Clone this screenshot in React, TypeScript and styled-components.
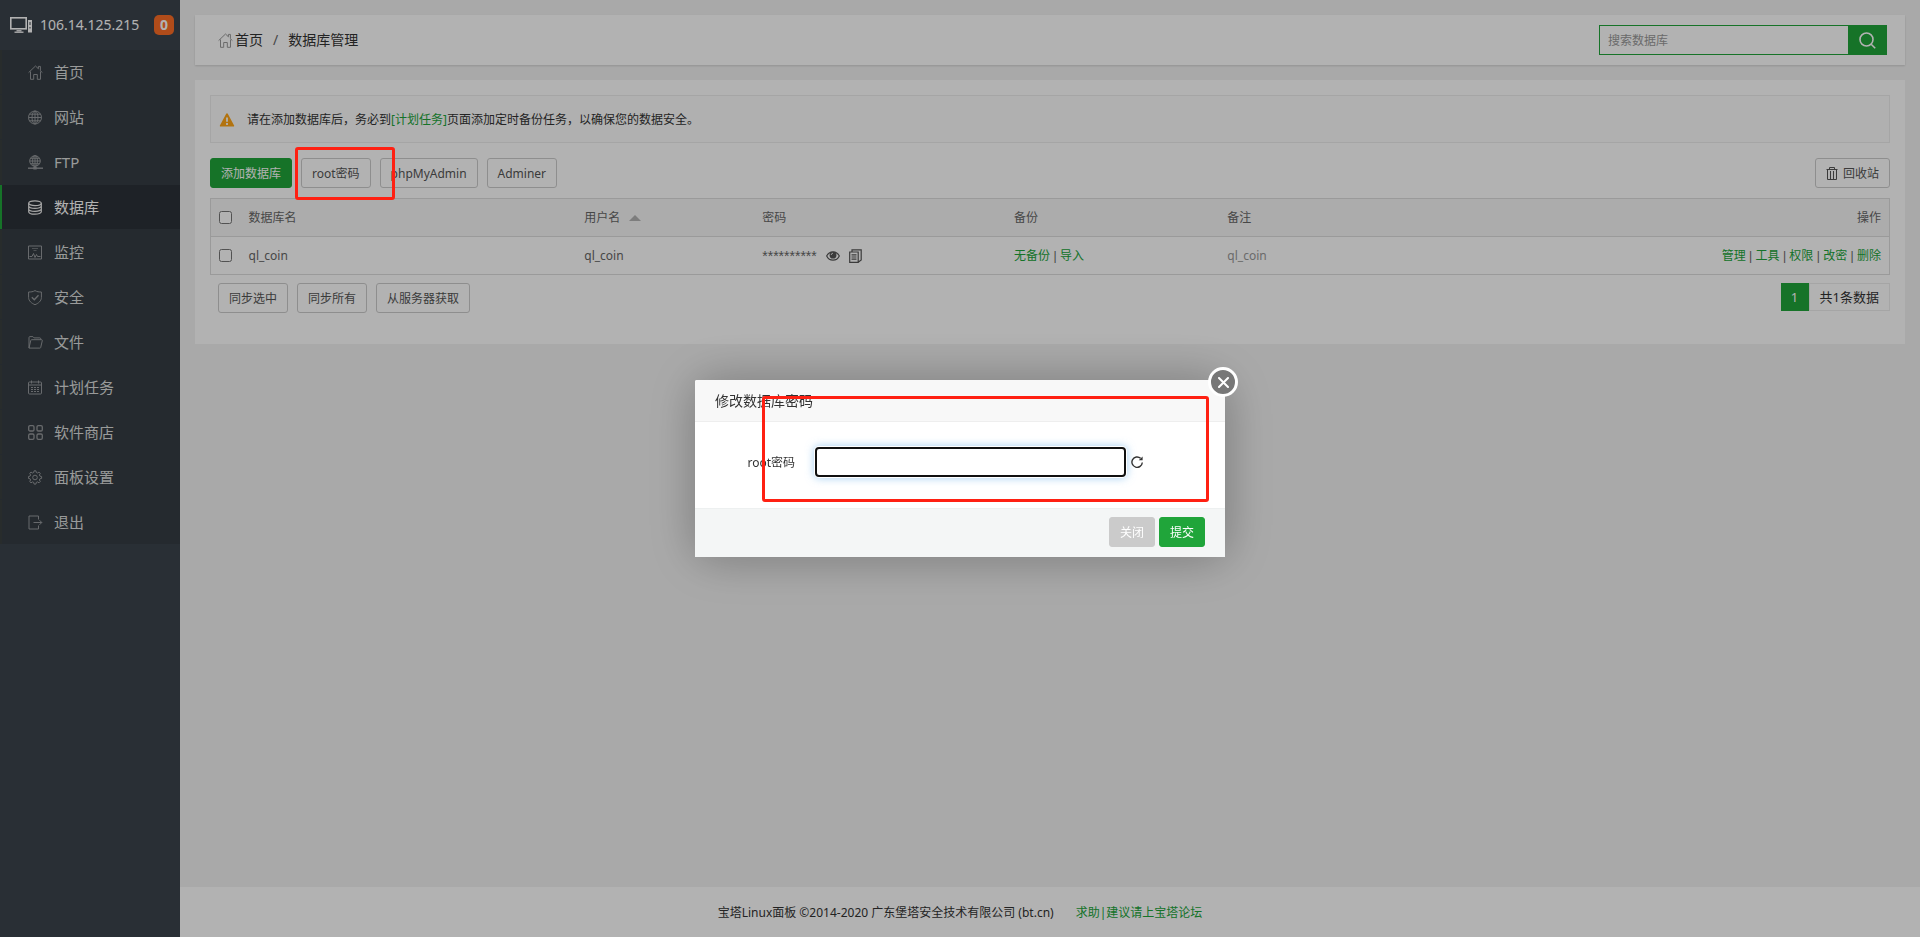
import React from 'react';
import styled, { createGlobalStyle } from 'styled-components';

const GREEN = '#20a53a';

const GlobalStyle = createGlobalStyle`
  *, *::before, *::after { box-sizing: border-box; }
  body {
    margin: 0;
    background: #f3f3f3;
    color: #333;
    font: 12px/18px "Noto Sans", "Noto Sans CJK SC", sans-serif;
  }
  button, input { font: inherit; margin: 0; }
  a { color: ${GREEN}; text-decoration: none; }
`;

const Page = styled.div`
  display: flex;
  min-height: 100vh;
`;

/* ---------- sidebar ---------- */

const Sidebar = styled.aside`
  flex: 0 0 180px;
  background: #3c444d;
`;

const ServerBar = styled.div`
  display: flex;
  align-items: center;
  justify-content: space-between;
  height: 50px;
  padding: 0 6px 0 10px;
  color: #fff;
`;

const ServerName = styled.span`
  display: flex;
  align-items: center;
  gap: 8px;
  font-size: 14px;
`;

const MessageCount = styled.span`
  width: 20px;
  height: 20px;
  border-radius: 5px;
  background: #fc6d26;
  font-size: 14px;
  font-weight: 700;
  line-height: 20px;
  text-align: center;
`;

const NavList = styled.ul`
  margin: 0;
  padding: 0;
  list-style: none;
  background: #353d44;
`;

const NavLink = styled.a<{ $active?: boolean }>`
  display: flex;
  align-items: center;
  gap: 11px;
  height: 44px;
  margin-bottom: 1px;
  padding-left: 26px;
  border-left: 2px solid ${(p) => (p.$active ? GREEN : '#3a3f40')};
  background: ${(p) => (p.$active ? '#2c3138' : 'transparent')};
  color: ${(p) => (p.$active ? '#fff' : '#dcdddd')};
  font-size: 15px;

  svg { color: ${(p) => (p.$active ? '#f0f0f0' : '#96999c')}; }
`;

/* ---------- main column ---------- */

const Main = styled.div`
  flex: 1;
  min-width: 0;
  display: flex;
  flex-direction: column;
`;

const Content = styled.main`
  flex: 1;
  display: flex;
  flex-direction: column;
  gap: 15px;
  padding: 15px;
`;

const TopBar = styled.header`
  display: flex;
  align-items: center;
  justify-content: space-between;
  height: 50px;
  padding: 0 18px 0 23px;
  background: #fff;
  box-shadow: 0 1px 2px rgba(0, 0, 0, 0.15);
`;

const Breadcrumb = styled.nav`
  display: flex;
  align-items: center;
  gap: 10px;
  font-size: 14px;
`;

const Crumb = styled.a`
  display: flex;
  align-items: center;
  gap: 2px;
  color: #333;
  svg { color: #999; }
`;

const CrumbSeparator = styled.span`
  color: #666;
`;

const SearchForm = styled.form`
  display: flex;
  width: 288px;
  height: 30px;
`;

const SearchInput = styled.input`
  flex: 1;
  min-width: 0;
  padding: 2px 8px 0;
  border: 1px solid ${GREEN};
  border-right: 0;
  border-radius: 0;
  background: #fff;
  outline: none;
  &::placeholder { color: #999; opacity: 1; }
`;

const SearchButton = styled.button`
  display: flex;
  align-items: center;
  justify-content: center;
  width: 39px;
  padding: 0;
  border: 0;
  background: ${GREEN};
  color: #fff;
`;

const Panel = styled.section`
  padding: 15px 15px 31px;
  background: #fff;
`;

const Notice = styled.p`
  display: flex;
  align-items: center;
  gap: 12px;
  height: 48px;
  margin: 0 0 15px;
  padding: 2px 8px 0;
  border: 1px solid #ededed;
  background: #fcfcfc;
`;

const Toolbar = styled.div<{ $inset?: boolean }>`
  display: flex;
  align-items: flex-start;
  justify-content: space-between;
  margin-bottom: ${(p) => (p.$inset ? '0' : '10px')};
  padding: ${(p) => (p.$inset ? '8px 0 0 8px' : '0')};
`;

const ButtonGroup = styled.div`
  display: flex;
  gap: 9px;
`;

type Tone = 'plain' | 'primary' | 'muted';

const toneStyles: Record<Tone, string> = {
  plain: 'background: #fff; border-color: #ccc; color: #555;',
  primary: `background: ${GREEN}; border-color: ${GREEN}; color: #fff;`,
  muted: 'background: #cbcbcb; border-color: #cbcbcb; color: #fff;',
};

const Button = styled.button<{ $tone?: Tone }>`
  display: flex;
  align-items: center;
  gap: 5px;
  height: 30px;
  padding: 2px 10px 0;
  border: 1px solid;
  border-radius: 3px;
  white-space: nowrap;
  ${(p) => toneStyles[p.$tone ?? 'plain']}
`;

const Marked = styled.div`
  position: relative;
`;

const Highlight = styled.span<{ $top: number; $left: number; $width: number; $height: number }>`
  position: absolute;
  z-index: 30;
  top: ${(p) => p.$top}px;
  left: ${(p) => p.$left}px;
  width: ${(p) => p.$width}px;
  height: ${(p) => p.$height}px;
  border: 3px solid #ff2012;
  border-radius: 3px;
  pointer-events: none;
`;

const Table = styled.table`
  width: 100%;
  table-layout: fixed;
  border: 1px solid #ddd;
  border-collapse: collapse;
  color: #666;
`;

const HeadCell = styled.th<{ $width?: string; $right?: boolean }>`
  width: ${(p) => p.$width ?? 'auto'};
  height: 38px;
  padding: 0 8px;
  background: #f6f6f6;
  border-bottom: 1px solid #ddd;
  font-weight: 400;
  text-align: ${(p) => (p.$right ? 'right' : 'left')};
`;

const Cell = styled.td<{ $right?: boolean; $soft?: boolean }>`
  height: 38px;
  padding: 0 8px;
  color: ${(p) => (p.$soft ? '#999' : 'inherit')};
  text-align: ${(p) => (p.$right ? 'right' : 'left')};
`;

const Tick = styled.input`
  display: block;
  width: 13px;
  height: 13px;
`;

const InlineRow = styled.span`
  display: flex;
  align-items: center;
  gap: 9px;
`;

const MaskedPassword = styled.span`
  font-family: "Liberation Sans", sans-serif;
  font-size: 14px;
`;

const Divider = styled.span`
  font-family: "Liberation Sans", sans-serif;
`;

const IconButton = styled.button`
  display: flex;
  padding: 0;
  border: 0;
  background: none;
  color: #555;
`;

const Pager = styled.div`
  display: flex;
  height: 28px;
  font-size: 13px;
  line-height: 28px;
`;

const PageNumber = styled.span`
  width: 28px;
  background: ${GREEN};
  color: #fff;
  text-align: center;
`;

const PageTotal = styled.span`
  padding: 0 10px;
  border: 1px solid #ededed;
  line-height: 26px;
`;

const Footer = styled.footer`
  display: flex;
  align-items: center;
  justify-content: center;
  gap: 22px;
  height: 50px;
  padding: 2px 180px 0 0;
  background: #fff;
`;

/* ---------- dialog ---------- */

const Backdrop = styled.div`
  position: fixed;
  inset: 0;
  z-index: 20;
  display: flex;
  align-items: center;
  justify-content: center;
  background: rgba(0, 0, 0, 0.3);
`;

const Dialog = styled.div`
  position: relative;
  width: 530px;
  border-radius: 2px;
  background: #fff;
  box-shadow: 1px 1px 50px rgba(0, 0, 0, 0.3);
`;

const DialogTitle = styled.h2`
  height: 42px;
  margin: 0;
  padding: 0 20px;
  border-bottom: 1px solid #eee;
  border-radius: 2px 2px 0 0;
  background: #f8f8f8;
  font-size: 14px;
  font-weight: 400;
  line-height: 42px;
`;

const DialogBody = styled.div`
  display: flex;
  align-items: center;
  height: 86px;
  padding-bottom: 6px;
`;

const FieldLabel = styled.label`
  width: 100px;
  margin-right: 20px;
  padding-top: 2px;
  text-align: right;
`;

const PasswordInput = styled.input`
  width: 311px;
  height: 30px;
  margin-right: 5px;
  padding: 0 10px;
  border: 2px solid #101010;
  border-radius: 4px;
  outline: none;
  box-shadow: 0 0 0 1px #fff, 0 0 9px 1px rgba(102, 175, 233, 0.6);
`;

const DialogFooter = styled.div`
  display: flex;
  justify-content: flex-end;
  gap: 4px;
  padding: 8px 20px 10px;
  border-top: 1px solid #edf0f0;
  background: #f4f6f6;
`;

const CloseButton = styled.button`
  position: absolute;
  top: -13px;
  right: -13px;
  display: flex;
  align-items: center;
  justify-content: center;
  width: 30px;
  height: 30px;
  padding: 0;
  border: 3px solid #fff;
  border-radius: 50%;
  background: #777;
  color: #fff;
`;

/* ---------- icons ---------- */

type IconProps = { size?: number; children: React.ReactNode };

const Icon = ({ size = 15, children }: IconProps) => (
  <svg width={size} height={size} viewBox="0 0 15 15" fill="none" stroke="currentColor" strokeWidth="1" aria-hidden="true">
    {children}
  </svg>
);

const homeShape = (
  <path d="M.6 7.6 7.5 1l2.9 2.8V1.4h2v4.3l2 1.9M2.5 6.5v7.8h3.2V9.5h3.6v4.8h3.2V6.5" />
);
const globeShape = (
  <>
    <circle cx="7" cy="7.5" r="6.5" />
    <ellipse cx="7" cy="7.5" rx="3" ry="6.5" />
    <path d="M7 1v13M.5 7.5h13M1.4 4.2h11.2M1.4 10.8h11.2" />
  </>
);
const ftpShape = (
  <>
    <circle cx="7" cy="6" r="5.3" />
    <ellipse cx="7" cy="6" rx="2.4" ry="5.3" />
    <path d="M7 .7v12M1.7 6h10.6M2.5 3.3h9M2.5 8.7h9" />
    <path d="M-.5 13.2h15.5" strokeWidth="1.4" />
    <path d="M5.3 13.2h3.4" strokeWidth="2.6" />
  </>
);
const databaseShape = (
  <g strokeWidth="1.2">
    <ellipse cx="7" cy="3.2" rx="6.3" ry="2.4" />
    <path d="M.7 3.2v8.5C.7 13 3.5 14.2 7 14.2s6.3-1.2 6.3-2.5V3.2M.7 6c0 1.3 2.8 2.4 6.3 2.4S13.3 7.3 13.3 6M.7 8.9c0 1.3 2.8 2.4 6.3 2.4s6.3-1.1 6.3-2.4" />
  </g>
);
const monitorShape = (
  <>
    <path d="M.5 1h13v13H.5z" />
    <path d="M4 3.5h6M5.5 5.500h3" strokeOpacity=".6" />
    <path d="M1.500 11.500H4l1.500-3 1.500 4 1.500-3 1 2h3" />
  </>
);
const shieldShape = (
  <>
    <path d="M7 .6C5 1.8 3 2 .6 2v5.500c0 3.500 3 5.800 6.400 7.200 3.400-1.400 6.400-3.700 6.400-7.200V2C11 2 9 1.800 7 .6Z" />
    <path d="m3.800 7.300 2.500 2.500 4.200-4.500" strokeWidth="1.3" />
  </>
);
const folderShape = (
  <path d="M1 13V2.500c0-.5.300-.9.900-.9h3l1.200 1.300h5.700c.6 0 1 .4 1 1v.8M1 13 2.800 5.300c.1-.4.400-.6.800-.6h10c.5 0 .8.400.7.900l-1.600 6.900c-.1.400-.4.600-.8.600H1Z" />
);
const calendarShape = (
  <>
    <rect x=".5" y="2" width="13" height="12" rx="1" />
    <path d="M.5 5h13M3.5.5v3M10.5.5v3" />
    <path d="M3 7.5h8M3 9.500h8M3 11.500h8" strokeDasharray="2 1" />
  </>
);
const appsShape = (
  <g strokeWidth="1.3">
    <rect x=".7" y=".7" width="5.300" height="5.300" rx="1.3" />
    <rect x="9" y=".7" width="5.300" height="5.300" rx="1.3" />
    <rect x=".7" y="9" width="5.300" height="5.300" rx="1.3" />
    <rect x="9" y="9" width="5.300" height="5.300" rx="1.3" />
  </g>
);
const gearShape = (
  <>
    <circle cx="7" cy="7.500" r="2.300" />
    <path d="m5.700 2.500.4-1.700h1.800l.4 1.700 1.200.5 1.500-.9 1.300 1.300-.9 1.500.5 1.200 1.700.5v1.800l-1.700.4-.5 1.200.9 1.500-1.300 1.300-1.500-.9-1.200.5-.4 1.700H6.100l-.4-1.700-1.200-.5-1.500.9-1.300-1.300.9-1.500-.5-1.200-1.700-.4V6.600l1.700-.5.5-1.200-.9-1.500L3 2.100l1.500.9Z" />
  </>
);
const exitShape = (
  <>
    <path d="M10.500 4.500V1H1v13h9.500v-3.500M5.500 7.500h8.300" />
    <path d="m11.500 5.200 2.300 2.300-2.300 2.300" />
  </>
);

const ServerIcon = () => (
  <svg width="22" height="16" viewBox="0 0 22 16" fill="none" stroke="currentColor" aria-hidden="true">
    <rect x=".8" y=".8" width="15.400" height="11" strokeWidth="1.600" />
    <path d="M4.500 15.200h9" strokeWidth="1.300" />
    <path d="M6.500 13.800h5" strokeWidth="1.300" />
    <path d="M18 3h4v12.500h-4z" fill="currentColor" stroke="none" />
    <path d="M20 5v3M20 10v1.500" stroke="#3c444d" strokeWidth="1" />
  </svg>
);
const SearchIcon = () => (
  <svg width="17" height="17" viewBox="0 0 17 17" fill="none" stroke="currentColor" strokeWidth="1.6" aria-hidden="true">
    <circle cx="7.500" cy="7.500" r="6.500" />
    <path d="m12.200 12.200 4 4" />
  </svg>
);
const WarningIcon = () => (
  <svg width="16" height="14" viewBox="0 0 16 14" aria-hidden="true">
    <path d="M7.200.8a1 1 0 0 1 1.600 0l6.300 11.600a.8.8 0 0 1-.7 1.200H1.600a.8.8 0 0 1-.7-1.200Z" fill="#ffa516" />
    <path d="M8 4.500v4.200M8 10v2" stroke="#fff" strokeWidth="1.800" />
  </svg>
);
const TrashIcon = () => (
  <svg width="12" height="14" viewBox="0 0 12 14" fill="none" stroke="currentColor" aria-hidden="true">
    <path d="M.5 2.500h11M3.500 2.500v-2h5v2M1.500 2.500v10h9v-10M4.500 4v8.500M7.500 4v8.500" />
  </svg>
);
const EyeIcon = () => (
  <svg width="14" height="12" viewBox="0 0 14 12" aria-hidden="true">
    <path d="M.7 6C2 3.300 4.300 1.800 7 1.800S12 3.300 13.300 6C12 8.700 9.700 10.200 7 10.200S2 8.700.7 6Z" fill="none" stroke="currentColor" strokeWidth="1.200" />
    <circle cx="7" cy="5.200" r="3.400" fill="currentColor" />
    <path d="M5.200 5A1.900 1.900 0 0 1 7 3.200" fill="none" stroke="#fff" strokeWidth=".8" />
  </svg>
);
const CopyIcon = () => (
  <svg width="13" height="14" viewBox="0 0 13 14" fill="none" stroke="currentColor" strokeWidth="1.200" aria-hidden="true">
    <path d="M.7 3h8.500v10.300H.7zM3 3V.8h9.200V11l-3 2.200M2.500 5.800h5M2.500 8h5M2.500 10.200h5" />
  </svg>
);
const SortIcon = () => (
  <svg width="12" height="6" viewBox="0 0 12 6" aria-hidden="true">
    <path d="M0 6 6 0l6 6Z" fill="#b3b3b3" />
  </svg>
);
const RefreshIcon = () => (
  <svg width="12" height="12" viewBox="0 0 12 12" fill="none" stroke="#333" strokeWidth="1.400" aria-hidden="true">
    <path d="M11.300 6.500A5.200 5.200 0 1 1 9.600 2.300" />
    <path d="M11.600.4v3.900H7.700Z" fill="#333" stroke="none" />
  </svg>
);
const CrossIcon = () => (
  <svg width="11" height="11" viewBox="0 0 11 11" fill="none" stroke="currentColor" strokeWidth="2" strokeLinecap="round" aria-hidden="true">
    <path d="m1 1 9 9M10 1l-9 9" />
  </svg>
);

/* ---------- data ---------- */

const navItems = [
  { label: '首页', shape: homeShape },
  { label: '网站', shape: globeShape },
  { label: 'FTP', shape: ftpShape },
  { label: '数据库', shape: databaseShape, active: true },
  { label: '监控', shape: monitorShape },
  { label: '安全', shape: shieldShape },
  { label: '文件', shape: folderShape },
  { label: '计划任务', shape: calendarShape },
  { label: '软件商店', shape: appsShape },
  { label: '面板设置', shape: gearShape },
  { label: '退出', shape: exitShape },
];

const rowActions = ['管理', '工具', '权限', '改密', '删除'];

const LinkList = ({ labels }: { labels: string[] }) => (
  <>
    {labels.map((label, i) => (
      <React.Fragment key={label}>
        {i > 0 && <Divider> | </Divider>}
        <a href="#">{label}</a>
      </React.Fragment>
    ))}
  </>
);

export default function App() {
  return (
    <>
      <GlobalStyle />
      <Page>
        <Sidebar>
          <ServerBar>
            <ServerName>
              <ServerIcon />
              106.14.125.215
            </ServerName>
            <MessageCount>0</MessageCount>
          </ServerBar>
          <NavList>
            {navItems.map((item) => (
              <li key={item.label}>
                <NavLink href="#" $active={item.active}>
                  <Icon>{item.shape}</Icon>
                  {item.label}
                </NavLink>
              </li>
            ))}
          </NavList>
        </Sidebar>

        <Main>
          <Content>
            <TopBar>
              <Breadcrumb>
                <Crumb href="#">
                  <Icon>{homeShape}</Icon>
                  首页
                </Crumb>
                <CrumbSeparator>/</CrumbSeparator>
                <span>数据库管理</span>
              </Breadcrumb>
              <SearchForm>
                <SearchInput type="text" aria-label="搜索数据库" placeholder="搜索数据库" />
                <SearchButton type="button" aria-label="搜索">
                  <SearchIcon />
                </SearchButton>
              </SearchForm>
            </TopBar>

            <Panel>
              <Notice>
                <WarningIcon />
                <span>
                  请在添加数据库后，务必到<a href="#">[计划任务]</a>页面添加定时备份任务，以确保您的数据安全。
                </span>
              </Notice>

              <Toolbar>
                <ButtonGroup>
                  <Button $tone="primary">添加数据库</Button>
                  <Marked>
                    <Button>root密码</Button>
                    <Highlight $top={-11} $left={-6} $width={100} $height={53} />
                  </Marked>
                  <Button>phpMyAdmin</Button>
                  <Button>Adminer</Button>
                </ButtonGroup>
                <Button>
                  <TrashIcon />
                  回收站
                </Button>
              </Toolbar>

              <Table>
                <thead>
                  <tr>
                    <HeadCell $width="30px">
                      <Tick type="checkbox" aria-label="全选" />
                    </HeadCell>
                    <HeadCell $width="20%">数据库名</HeadCell>
                    <HeadCell $width="10.6%">
                      <InlineRow>
                        用户名
                        <SortIcon />
                      </InlineRow>
                    </HeadCell>
                    <HeadCell $width="15%">密码</HeadCell>
                    <HeadCell $width="12.7%">备份</HeadCell>
                    <HeadCell>备注</HeadCell>
                    <HeadCell $right>操作</HeadCell>
                  </tr>
                </thead>
                <tbody>
                  <tr>
                    <Cell>
                      <Tick type="checkbox" aria-label="ql_coin" />
                    </Cell>
                    <Cell>ql_coin</Cell>
                    <Cell>ql_coin</Cell>
                    <Cell>
                      <InlineRow>
                        <MaskedPassword>**********</MaskedPassword>
                        <IconButton type="button" aria-label="显示密码">
                          <EyeIcon />
                        </IconButton>
                        <IconButton type="button" aria-label="复制密码">
                          <CopyIcon />
                        </IconButton>
                      </InlineRow>
                    </Cell>
                    <Cell>
                      <LinkList labels={['无备份', '导入']} />
                    </Cell>
                    <Cell $soft>ql_coin</Cell>
                    <Cell $right>
                      <LinkList labels={rowActions} />
                    </Cell>
                  </tr>
                </tbody>
              </Table>

              <Toolbar $inset>
                <ButtonGroup>
                  <Button>同步选中</Button>
                  <Button>同步所有</Button>
                  <Button>从服务器获取</Button>
                </ButtonGroup>
                <Pager>
                  <PageNumber>1</PageNumber>
                  <PageTotal>共1条数据</PageTotal>
                </Pager>
              </Toolbar>
            </Panel>
          </Content>

          <Footer>
            <span>宝塔Linux面板 ©2014-2020 广东堡塔安全技术有限公司 (bt.cn)</span>
            <a href="#">求助|建议请上宝塔论坛</a>
          </Footer>
        </Main>
      </Page>

      <Backdrop>
        <Dialog role="dialog" aria-labelledby="dialog-title">
          <DialogTitle id="dialog-title">修改数据库密码</DialogTitle>
          <DialogBody>
            <FieldLabel htmlFor="root-password">root密码</FieldLabel>
            <PasswordInput id="root-password" type="text" />
            <IconButton type="button" aria-label="随机密码">
              <RefreshIcon />
            </IconButton>
          </DialogBody>
          <DialogFooter>
            <Button $tone="muted">关闭</Button>
            <Button $tone="primary">提交</Button>
          </DialogFooter>
          <CloseButton type="button" aria-label="关闭窗口">
            <CrossIcon />
          </CloseButton>
          <Highlight $top={16} $left={67} $width={447} $height={106} />
        </Dialog>
      </Backdrop>
    </>
  );
}
